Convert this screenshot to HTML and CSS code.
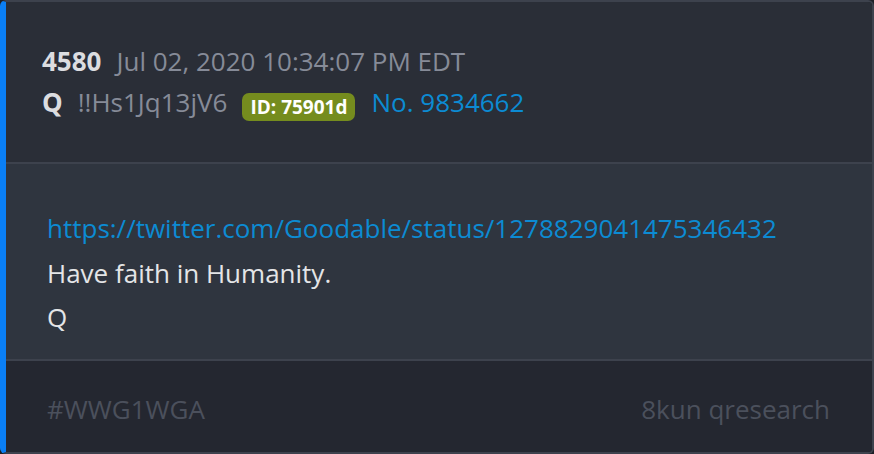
FILE: index.html
```html
<!DOCTYPE html>
<html lang="en">
<head>
  <meta charset="UTF-8" />
  <title>Q Drop 4580</title>
  <link rel="stylesheet" href="styles.css">
</head>
<body>

  <div class="post">
    <div class="post-head">
      <div class="line">
        <span class="num">4580</span>
        <span class="meta">Jul 02, 2020 10:34:07 PM EDT</span>
      </div>
      <div class="line">
        <span class="num">Q</span>
        <span class="meta">!!Hs1Jq13jV6</span>
        <span class="id-badge">ID: 75901d</span>
        <a class="ref" href="#">No. 9834662</a>
      </div>
    </div>

    <div class="post-body">
      <a class="link" href="#">https://twitter.com/Goodable/status/1278829041475346432</a>
      <div>Have faith in Humanity.</div>
      <div>Q</div>
    </div>

    <div class="post-foot">
      <span>#WWG1WGA</span>
      <span>8kun qresearch</span>
    </div>
  </div>

</body>
</html>
```

FILE: styles.css
```css
body {
  margin: 0;
  background-color: #1d2027;
  font-family: "Open Sans", sans-serif;
  font-size: 26px;
}

.post {
  height: 454px;
  box-sizing: border-box;
  border: 2px solid #3d424d;
  border-left: 6px solid #0a7ff5;
  border-radius: 6px;
  overflow: hidden;
  display: flex;
  flex-direction: column;
}

.post-head {
  background: #2a2e37;
  padding: 39px 36px 39px;
  border-bottom: 2px solid #3d424d;
}

.line {
  line-height: 41px;
  display: flex;
  align-items: center;
}

.num {
  font-weight: 700;
  color: #dcdde0;
  margin-right: 15px;
}

.meta {
  color: #868b98;
}

.id-badge {
  background: #758c1e;
  color: #fff;
  font-weight: 700;
  font-size: 19px;
  line-height: 28px;
  padding: 0 8px;
  border-radius: 7px;
  margin: 8px 16px 0 15px;
}

.ref, .link {
  color: #0c8bd3;
  text-decoration: none;
}

.post-body {
  background: #2f353f;
  color: #e4e5e7;
  padding: 42px 41px 19px;
  line-height: 44.5px;
  border-bottom: 2px solid #3d424d;
}

.post-foot {
  flex: 1;
  background: #242730;
  color: #4b505c;
  padding: 32px 42px 0 41px;
  line-height: 32px;
  display: flex;
  justify-content: space-between;
}
```
